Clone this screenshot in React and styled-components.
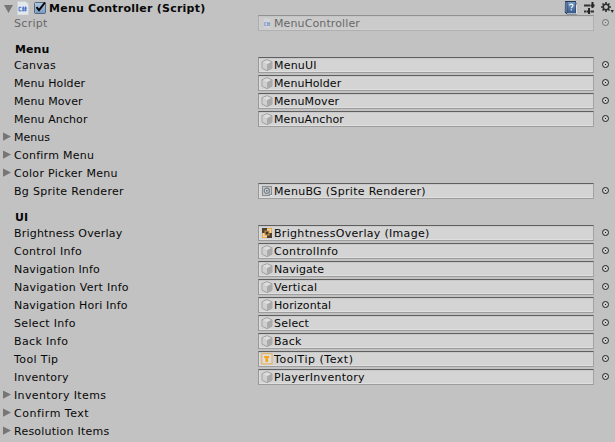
import React from 'react';
import styled, { createGlobalStyle } from 'styled-components';

const GlobalStyle = createGlobalStyle`
  body {
    margin: 0;
    background: #c2c2c2;
    overflow: hidden;
  }
`;

const Inspector = styled.main`
  width: 615px;
  height: 442px;
  overflow: hidden;
  background: #c2c2c2;
  color: #080808;
  font: 11px/16px "DejaVu Sans", Verdana, sans-serif;
  white-space: nowrap;

  svg {
    display: block;
    flex: none;
  }
`;

const TitleBar = styled.header`
  display: flex;
  align-items: flex-start;
  height: 15px;
  padding: 1px 1px 0 4px;
  box-sizing: border-box;
`;

const FoldoutSlot = styled.span`
  width: 10px;
  padding-top: 4px;
  margin-right: 3px;
`;

const Checkbox = styled.span`
  width: 12px;
  height: 12px;
  margin: 0 3px 0 5px;
`;

const Title = styled.h1`
  flex: 1;
  margin: 0;
  font: bold 11px/15px "DejaVu Sans", Verdana, sans-serif;
  letter-spacing: 0.24px;
`;

const Tools = styled.div`
  display: flex;
  gap: 6px;
`;

const SectionTitle = styled.h2`
  height: 24px;
  margin: 0;
  padding: 8px 0 0 15px;
  box-sizing: border-box;
  font: bold 11px/17px "DejaVu Sans", Verdana, sans-serif;
  letter-spacing: 0.1px;
`;

const Row = styled.div`
  display: grid;
  grid-template-columns: 14px 244px 336px 21px;
  height: 18px;
  opacity: ${(p) => (p.$disabled ? 0.5 : 1)};
`;

const Arrow = styled.span`
  padding: 3px 0 0 3px;
`;

const Label = styled.span`
  padding-top: 1px;
  letter-spacing: ${(p) => p.$tracking}px;
`;

const Field = styled.div`
  display: flex;
  height: 16px;
  padding-left: 2px;
  box-sizing: border-box;
  border: 1px solid;
  border-color: #5f5f5f #a2a2a2 #9d9d9d #989898;
  background: #d4d4d4;
  box-shadow: inset 0 1px #c9c9c9, inset 1px 0 #dcdcdc, inset 0 -1px #dfdfdf;
`;

const Value = styled.span`
  margin-left: 1px;
  line-height: 15px;
  letter-spacing: ${(p) => p.$tracking}px;
`;

const Picker = styled.span`
  padding: 4px 0 0 8px;
`;

function Triangle({ open }) {
  return open ? (
    <svg width="10" height="9" viewBox="0 0 10 9"><path d="M0 0h9L4.5 8z" fill="#767676" /></svg>
  ) : (
    <svg width="9" height="10" viewBox="0 0 9 10"><path d="M0 .4v8.4L8 4.6z" fill="#767676" /></svg>
  );
}

function ScriptIcon({ small }) {
  return (
    <svg width="12" height="14" viewBox={small ? '-2 -1 12 14' : '0 0 12 14'}>
      <path d={small ? 'M.5 1h5L8 3.5v8H.5z' : 'M.5.5h8L11.5 3v11H.5z'} fill="#e3e7ec" stroke="#cbd0d7" strokeWidth=".6" />
      {small ? (
        <path d="M3.4 5.6H1.6v3h1.8M4.6 5v4M6.4 5v4M3.8 6.3h3.4M3.8 8.2h3.4" fill="none" stroke="#3974cc" strokeWidth=".9" />
      ) : (
        <path d="M4.4 6.3H2.1v3.6h2.3M6.4 5.5l-.4 5M8.6 5.5l-.4 5M5 7.1h5M4.8 9.1h5" fill="none" stroke="#416bc9" strokeWidth="1" />
      )}
    </svg>
  );
}

function CubeIcon() {
  return (
    <svg width="12" height="14" viewBox="0 0 12 14">
      <path d="M6 1.7l4.9 2v6.4L6 12.6l-4.9-2.5V3.7z" fill="#c5c5c5" stroke="#969696" strokeWidth=".9" />
      <path d="M6 2.2l4.3 1.8L6 6.3 1.7 4z" fill="#dedede" />
      <path d="M6 6.3l4.4-2.2v5.7L6 12z" fill="#aaa" />
      <path d="M1.6 4.3L6 6.5V12L1.6 9.8z" fill="#d0d0d0" />
    </svg>
  );
}

function SpriteIcon() {
  return (
    <svg width="12" height="14" viewBox="0 0 12 14">
      <rect x="1.5" y="2.5" width="9" height="9" fill="#bfc5c9" stroke="#8d8d8d" />
      <circle cx="5.8" cy="6.8" r="2.6" fill="#d4dce1" stroke="#788187" strokeWidth="1.2" />
      <circle cx="5.8" cy="6.8" r="1" fill="#617582" />
      <path d="M8 10.5h3M10.5 8v4" stroke="#858585" />
      <path d="M9 11.5h2" stroke="#eee" />
    </svg>
  );
}

function ImageIcon() {
  return (
    <svg width="12" height="14" viewBox="0 0 12 14">
      <rect x="1.5" y="2.5" width="9" height="9" fill="#e4d6bd" stroke="#eda93f" />
      <path d="M1 2h5v5H1zM6 7h5v5H6z" fill="#4b4031" />
      <rect x="4" y="5" width="4" height="4" fill="#5a4830" stroke="#d5943b" />
      <path d="M5 7h2" stroke="#292622" />
    </svg>
  );
}

function TextIcon() {
  return (
    <svg width="12" height="14" viewBox="0 0 12 14">
      <rect x=".8" y="1.7" width="10.2" height="10.2" fill="#dedede" stroke="#e8ae4f" />
      <path d="M3.2 4h5v2H7v4H4.5V6H3.2z" fill="#f8a414" />
    </svg>
  );
}

function PickerIcon() {
  return (
    <svg width="8" height="8" viewBox="0 0 8 8">
      <circle cx="3.5" cy="3.5" r="3" fill="#cecece" stroke="#202020" />
      <path d="M3 3h1v1H3z" fill="#111" />
    </svg>
  );
}

function CheckIcon() {
  return (
    <svg width="14" height="13" viewBox="0 0 14 13">
      <defs>
        <linearGradient id="checkFill" x2="0" y2="1">
          <stop stopColor="#b3c8e0" />
          <stop offset="1" stopColor="#789ac2" />
        </linearGradient>
      </defs>
      <rect x=".5" y="1.5" width="11" height="11" rx="1" fill="url(#checkFill)" stroke="#53687e" />
      <path d="M2.5 6.2l2.5 3L11 1.5" fill="none" stroke="#050505" strokeWidth="2" />
    </svg>
  );
}

function HelpIcon() {
  return (
    <svg width="14" height="14" viewBox="0 0 14 14">
      <defs>
        <linearGradient id="bookFill" x2="0" y2="1">
          <stop stopColor="#7897c2" />
          <stop offset="1" stopColor="#365b8f" />
        </linearGradient>
      </defs>
      <path d="M1 0h11v2l1 1v10.5H3L.8 11.5z" fill="#243955" />
      <path d="M3 12.2h9V3l1 .5v9.8H3z" fill="#dbdfe5" />
      <path d="M3.4 1h8.1v11H3.4z" fill="url(#bookFill)" />
      <path d="M1.4 1h1.4v10.9L1.4 10.7z" fill="#6b88ae" />
      <path d="M5.6 4.5q0-1.3 1.7-1.3t1.7 1.3c0 1.2-1.7 1.2-1.7 2.7M7.3 8.3v1.3" fill="none" stroke="#f3f6fa" strokeWidth="1.2" />
    </svg>
  );
}

function PresetIcon() {
  return (
    <svg width="11" height="14" viewBox="0 0 11 14">
      <path d="M0 4.5h6M9 4.5h1M0 10.5h2M7 10.5h3" stroke="#333" strokeWidth="2" />
      <path d="M8.5 1v6M5 7v6" stroke="#262626" strokeWidth="2" />
      <path d="M6.5 4.5h4M2.5 10.5h4" stroke="#262626" strokeWidth="2" />
    </svg>
  );
}

function GearIcon() {
  return (
    <svg width="13" height="14" viewBox="0 0 13 14">
      <circle cx="5" cy="6" r="2.8" fill="none" stroke="#303030" strokeWidth="1.6" />
      <path d="M5 1v2M5 9v2M0 6h2M8 6h2M1.5 2.5l1.4 1.4M7.1 8.1l1.4 1.4M1.5 9.5l1.4-1.4M7.1 3.9l1.4-1.4" stroke="#303030" strokeWidth="1.6" />
      <path d="M9.6 9h3.2l-1.6 3z" fill="#242424" />
    </svg>
  );
}

const icons = { cube: CubeIcon, sprite: SpriteIcon, image: ImageIcon, text: TextIcon };

const sections = [
  {
    title: 'Menu',
    rows: [
      { label: 'Canvas', value: 'MenuUI', icon: 'cube', labelTracking: 0.28 },
      { label: 'Menu Holder', value: 'MenuHolder', icon: 'cube', labelTracking: 0.1, valueTracking: 0.07 },
      { label: 'Menu Mover', value: 'MenuMover', icon: 'cube', labelTracking: 0.1, valueTracking: 0.1 },
      { label: 'Menu Anchor', value: 'MenuAnchor', icon: 'cube', labelTracking: 0.1, valueTracking: 0.1 },
      { label: 'Menus', labelTracking: 0 },
      { label: 'Confirm Menu', labelTracking: 0.26 },
      { label: 'Color Picker Menu', labelTracking: 0.3 },
      { label: 'Bg Sprite Renderer', value: 'MenuBG (Sprite Renderer)', icon: 'sprite', labelTracking: 0.31, valueTracking: 0.31 },
    ],
  },
  {
    title: 'UI',
    rows: [
      { label: 'Brightness Overlay', value: 'BrightnessOverlay (Image)', icon: 'image', valueTracking: 0.31 },
      { label: 'Control Info', value: 'ControlInfo', icon: 'cube', labelTracking: 0.33, valueTracking: 0.34 },
      { label: 'Navigation Info', value: 'Navigate', icon: 'cube', labelTracking: 0.15, valueTracking: 0.1 },
      { label: 'Navigation Vert Info', value: 'Vertical', icon: 'cube', labelTracking: 0.27, valueTracking: 0.26 },
      { label: 'Navigation Hori Info', value: 'Horizontal', icon: 'cube', valueTracking: 0.1 },
      { label: 'Select Info', value: 'Select', icon: 'cube', labelTracking: 0.33 },
      { label: 'Back Info', value: 'Back', icon: 'cube', labelTracking: 0.36 },
      { label: 'Tool Tip', value: 'ToolTip (Text)', icon: 'text', labelTracking: 0.4, valueTracking: 0.53 },
      { label: 'Inventory', value: 'PlayerInventory', icon: 'cube', labelTracking: 0.26, valueTracking: 0.27 },
      { label: 'Inventory Items', labelTracking: 0.37 },
      { label: 'Confirm Text', labelTracking: 0.5 },
      { label: 'Resolution Items', labelTracking: 0.23 },
    ],
  },
];

function Property({ label, value, icon, disabled, labelTracking = 0.2, valueTracking = 0.2 }) {
  const Icon = icons[icon];
  return (
    <Row $disabled={disabled}>
      <Arrow>{!value && <Triangle />}</Arrow>
      <Label $tracking={labelTracking}>{label}</Label>
      {value && (
        <>
          <Field>
            {Icon ? <Icon /> : <ScriptIcon small />}
            <Value $tracking={valueTracking}>{value}</Value>
          </Field>
          <Picker><PickerIcon /></Picker>
        </>
      )}
    </Row>
  );
}

export default function App() {
  return (
    <>
      <GlobalStyle />
      <Inspector>
        <TitleBar>
          <FoldoutSlot><Triangle open /></FoldoutSlot>
          <ScriptIcon />
          <Checkbox><CheckIcon /></Checkbox>
          <Title>Menu Controller (Script)</Title>
          <Tools>
            <HelpIcon />
            <PresetIcon />
            <GearIcon />
          </Tools>
        </TitleBar>
        <Property label="Script" value="MenuController" disabled labelTracking={0.3} valueTracking={0.12} />
        {sections.map((section) => (
          <section key={section.title}>
            <SectionTitle>{section.title}</SectionTitle>
            {section.rows.map((row) => <Property key={row.label} {...row} />)}
          </section>
        ))}
      </Inspector>
    </>
  );
}
